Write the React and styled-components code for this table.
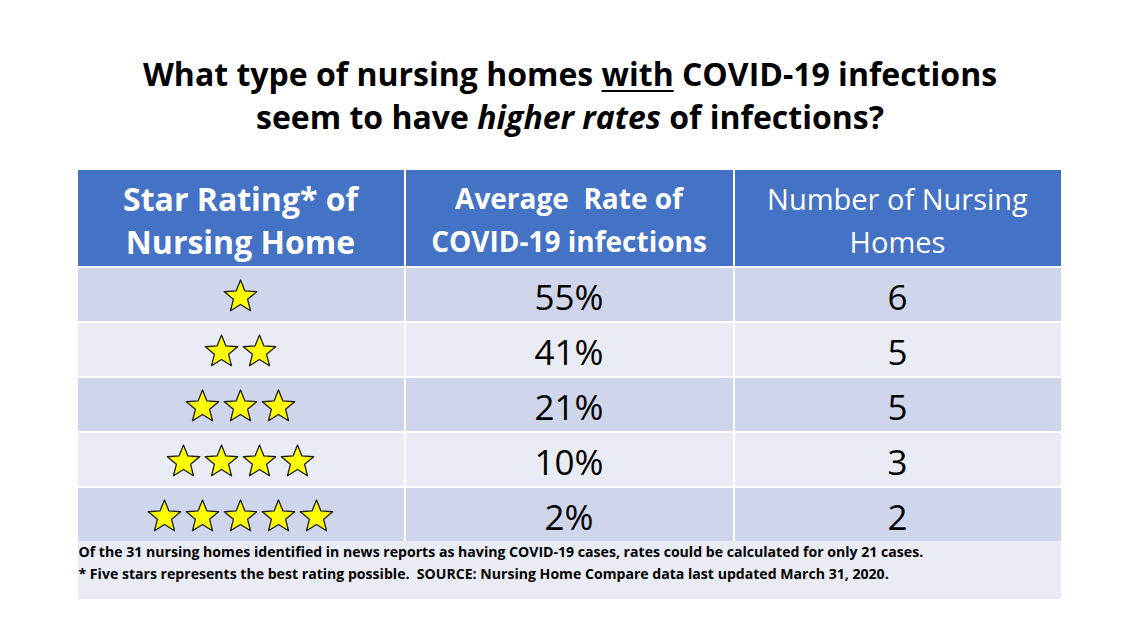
import React from 'react'
import styled, { createGlobalStyle } from 'styled-components'

const GlobalStyle = createGlobalStyle`
  html, body {
    margin: 0;
    padding: 0;
    background: #ffffff;
  }
  body {
    font-family: "Open Sans", Lato, sans-serif;
  }
`

const Page = styled.div`
  width: 1140px;
  height: 639px;
  display: flex;
  flex-direction: column;
  align-items: center;
  padding-top: 52px;
  box-sizing: border-box;
`

const Title = styled.h1`
  margin: 0;
  font-weight: 700;
  font-size: 32px;
  line-height: 43px;
  text-align: center;
  color: #000;

  u {
    text-decoration-thickness: 2px;
    text-underline-offset: 4px;
  }
`

const Table = styled.div`
  margin-top: 32px;
  margin-left: -2px;
  width: 983px;
  display: grid;
  grid-template-columns: 326px 327px 326px;
  column-gap: 2px;
  row-gap: 2px;
  background: #ffffff;
`

const HeadCell = styled.div`
  height: 96px;
  background: #4472c4;
  color: #ffffff;
  display: flex;
  align-items: center;
  justify-content: center;
  text-align: center;
  font-size: ${p => p.$size}px;
  font-weight: ${p => (p.$bold ? 700 : 400)};
  line-height: 43px;
  padding-top: 4px;
  box-sizing: border-box;
`

const Cell = styled.div`
  height: 53px;
  background: ${p => (p.$odd ? '#cfd5ea' : '#e9ebf5')};
  display: flex;
  align-items: center;
  justify-content: center;
  font-size: 35px;
  color: #000;
  padding-top: 4px;
  box-sizing: border-box;
`

const Stars = styled.div`
  display: flex;
  gap: 3px;
  padding-bottom: 3px;
`

const Footer = styled.div`
  grid-column: 1 / -1;
  height: 58px;
  margin-top: -2px;
  background: #e9ebf5;
  padding: 0 0 0 1px;
  box-sizing: border-box;
  font-size: 14.1px;
  font-weight: 700;
  line-height: 22px;
  color: #000;
`

const Star = () => (
  <svg width="35" height="33" viewBox="0 0 35 33">
    <polygon
      points="17.5,1 21.9,11.9 33.7,12.75 24.6,20.3 27.5,31.75 17.5,25.5 7.5,31.75 10.4,20.3 1.3,12.75 13.1,11.9"
      fill="#ffff00"
      stroke="#1e1e1e"
      strokeWidth="1.3"
      strokeLinejoin="round"
    />
  </svg>
)

const rows = [
  { stars: 1, rate: '55%', count: 6 },
  { stars: 2, rate: '41%', count: 5 },
  { stars: 3, rate: '21%', count: 5 },
  { stars: 4, rate: '10%', count: 3 },
  { stars: 5, rate: '2%', count: 2 },
]

export default function App() {
  return (
    <>
      <GlobalStyle />
      <Page>
        <Title>
          What type of nursing homes <u>with</u> COVID-19 infections
          <br />
          seem to have <i>higher rates</i> of infections?
        </Title>
        <Table>
          <HeadCell $bold $size={32}>Star Rating* of<br />Nursing Home</HeadCell>
          <HeadCell $bold $size={28}>Average&nbsp; Rate of<br />COVID-19 infections</HeadCell>
          <HeadCell $size={29}>Number of Nursing<br />Homes</HeadCell>
          {rows.map((r, i) => (
            <React.Fragment key={i}>
              <Cell $odd={i % 2 === 0}>
                <Stars>
                  {Array.from({ length: r.stars }).map((_, j) => (
                    <Star key={j} />
                  ))}
                </Stars>
              </Cell>
              <Cell $odd={i % 2 === 0}>{r.rate}</Cell>
              <Cell $odd={i % 2 === 0}>{r.count}</Cell>
            </React.Fragment>
          ))}
          <Footer>
            Of the 31 nursing homes identified in news reports as having COVID-19 cases, rates could be calculated for only 21 cases.
            <br />
            * Five stars represents the best rating possible.&nbsp; SOURCE: Nursing Home Compare data last updated March 31, 2020.
          </Footer>
        </Table>
      </Page>
    </>
  )
}
